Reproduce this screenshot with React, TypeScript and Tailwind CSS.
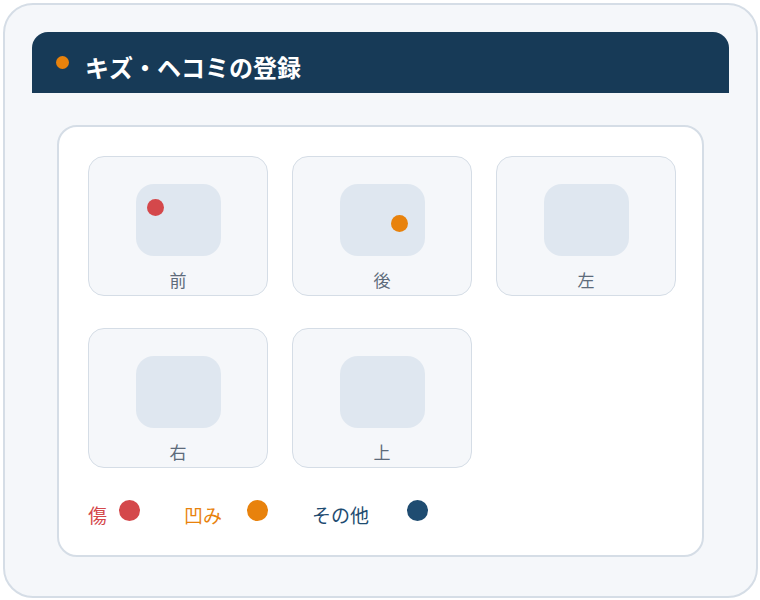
import React from 'react';

type Mark = { color: string; left: number; top: number };

const sides: { label: string; mark?: Mark }[] = [
  { label: '前', mark: { color: 'bg-[#d4484b]', left: 11, top: 15 } },
  { label: '後', mark: { color: 'bg-[#e8820c]', left: 51, top: 31 } },
  { label: '左' },
  { label: '右' },
  { label: '上' },
];

function SideTile({ label, mark }: { label: string; mark?: Mark }) {
  return (
    <div className="flex h-[140px] w-[180px] flex-col items-center rounded-[16px] border border-[#d5dde6] bg-[#f5f7fa] pt-[27px]">
      <div className="relative h-[72px] w-[85px] rounded-[18px] bg-[#dfe7f0]">
        {mark && (
          <span
            className={`absolute h-[17px] w-[17px] rounded-full ${mark.color}`}
            style={{ left: mark.left, top: mark.top }}
          />
        )}
      </div>
      <span className="mt-[12px] text-[17px] leading-6 text-[#5d6b7b]">{label}</span>
    </div>
  );
}

export default function App() {
  return (
    <div
      className="p-[3px]"
      style={{ fontFamily: '"Noto Sans CJK JP", "Noto Sans", sans-serif' }}
    >
      <div className="h-[595px] w-[755px] rounded-[30px] border-2 border-[#d5dde6] bg-[#f5f7fa] px-[27px] pt-[27px]">
        {/* Header */}
        <div className="flex h-[61px] items-center gap-4 rounded-t-[16px] bg-[#173a57] pl-6">
          <span className="h-[13px] w-[13px] rounded-full bg-[#e8820c]" />
          <h1 className="pt-2 text-[24px] font-bold leading-8 text-white">キズ・ヘコミの登録</h1>
        </div>

        {/* Body */}
        <div className="mx-[25px] mt-[32px] h-[432px] rounded-[20px] border-2 border-[#d5dde6] bg-white p-[29px]">
          <div className="grid grid-cols-[repeat(3,180px)] gap-x-6 gap-y-8">
            {sides.map((s) => (
              <SideTile key={s.label} label={s.label} mark={s.mark} />
            ))}
          </div>

          {/* Legend */}
          <div className="mt-8 flex items-start text-[19px] leading-7">
            <span className="pt-[1px] text-[#d4484b]">傷</span>
            <span className="ml-[12px] h-[21px] w-[21px] rounded-full bg-[#d4484b]" />
            <span className="ml-[44px] pt-[1px] text-[#e8820c]">凹み</span>
            <span className="ml-[25px] h-[21px] w-[21px] rounded-full bg-[#e8820c]" />
            <span className="ml-[44px] pt-[1px] text-[#1f4c71]">その他</span>
            <span className="ml-[38px] h-[21px] w-[21px] rounded-full bg-[#1f4c71]" />
          </div>
        </div>
      </div>
    </div>
  );
}
